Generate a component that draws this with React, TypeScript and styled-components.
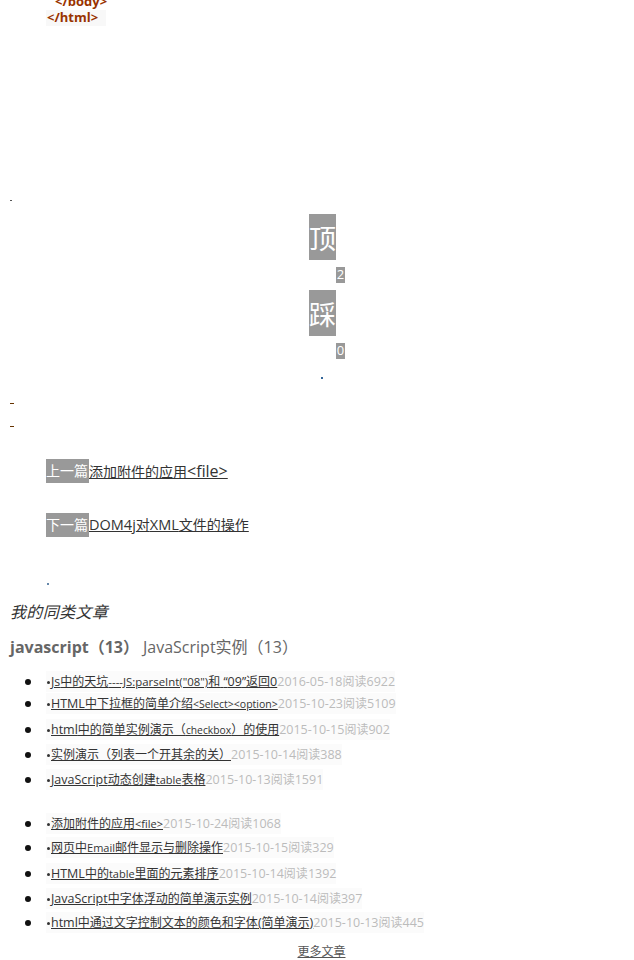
import React from 'react';
import styled, { createGlobalStyle } from 'styled-components';

const GlobalStyle = createGlobalStyle`
  html, body {
    margin: 0;
    padding: 0;
    background: #fff;
    overflow: hidden;
  }
  body {
    font-family: "Open Sans", "Noto Sans CJK SC", sans-serif;
    color: #333;
  }
`;

const Page = styled.div`
  width: 634px;
  height: 960px;
  overflow: hidden;
  padding-left: 10px;
  box-sizing: border-box;
`;

const CodeBlock = styled.div`
  margin: -6px 0 0 36px;
  height: 199px;
`;

const CodeLine = styled.div<{ $indent?: boolean; $shaded?: boolean }>`
  width: 60px;
  height: 16px;
  padding-left: ${(p) => (p.$indent ? '9px' : '1px')};
  box-sizing: border-box;
  font-size: 13px;
  font-weight: 700;
  line-height: 15px;
  color: #993300;
  background: ${(p) => (p.$shaded ? '#f8f8f8' : 'transparent')};
  white-space: pre;
`;

const Dot = styled.div`
  width: 2px;
  height: 1px;
  background: #555;
`;

const DotRow = styled.div`
  height: 15px;
  display: flex;
  align-items: center;
`;

const VoteArea = styled.div`
  display: flex;
  flex-direction: column;
  align-items: flex-start;
  margin-left: 299px;
  margin-top: 6px;
`;

const VoteButton = styled.div`
  width: 27px;
  height: 46px;
  overflow: hidden;
  background: #999;
  color: #fff;
  font-size: 27px;
  line-height: 48px;
  text-align: center;
  font-family: "Noto Sans CJK SC", sans-serif;
`;

const VoteCount = styled.div`
  width: 9px;
  height: 16px;
  margin: 7px 0 7px 27px;
  background: #999;
  color: #fff;
  font-size: 13px;
  line-height: 15px;
  text-align: center;
`;

const CenterDot = styled.div`
  margin: 11px 0 0 311px;
  width: 2px;
  height: 2px;
  background: #336699;
`;

const Dash = styled.div`
  width: 4px;
  height: 1px;
  background: #663300;
`;

const DashStack = styled.div`
  display: flex;
  flex-direction: column;
  gap: 22px;
  margin-top: 24px;
`;

const NavBlock = styled.div`
  display: flex;
  flex-direction: column;
  gap: 30px;
  margin-top: 32px;
`;

const NavRow = styled.div`
  display: flex;
  align-items: stretch;
  margin-left: 36px;
  height: 24px;
  font-size: 14px;
  line-height: 24px;
`;

const NavLabel = styled.span`
  width: 43px;
  background: #999;
  color: #fff;
  white-space: nowrap;
`;

const NavLink = styled.a`
  color: #333;
  text-decoration: underline;
  white-space: nowrap;
`;

const NavLatin = styled.span<{ $size: number }>`
  font-size: ${(p) => p.$size}px;
`;

const SmallDot = styled.div`
  width: 2px;
  height: 2px;
  margin: 46px 0 0 37px;
  background: #6688aa;
`;

const SectionTitle = styled.div`
  margin-top: 15px;
  height: 24px;
  font-size: 16px;
  letter-spacing: 0.35px;
  line-height: 24px;
  font-style: italic;
  color: #333;
`;

const Categories = styled.div`
  display: flex;
  gap: 4px;
  height: 24px;
  margin-top: 11px;
  font-size: 16px;
  line-height: 24px;
  color: #666;
`;

const Category = styled.span<{ $bold?: boolean }>`
  font-weight: ${(p) => (p.$bold ? 700 : 400)};
`;

const List = styled.ul<{ $top: number }>`
  list-style: none;
  margin: ${(p) => p.$top}px 0 0;
  padding: 0;
`;

const Item = styled.li<{ $gap: number }>`
  display: flex;
  align-items: center;
  height: 21px;
  margin-top: ${(p) => p.$gap}px;
  padding-left: 15px;
  &::before {
    content: "";
    width: 6px;
    height: 6px;
    border-radius: 50%;
    background: #111;
    margin-right: 15px;
  }
`;

const ItemBody = styled.div`
  display: flex;
  align-items: center;
  height: 21px;
  background: #fbfbfb;
  font-size: 12px;
  line-height: 21px;
  white-space: nowrap;
  &::before {
    content: "";
    width: 3px;
    height: 3px;
    border-radius: 50%;
    background: #333;
    margin: 1px 1px 0 1px;
  }
`;

const ItemLink = styled.a`
  color: #333;
  text-decoration: underline;
`;

const Latin = styled.span`
  font-size: 12.5px;
`;

const SmallLatin = styled.span<{ $size: number }>`
  font-size: ${(p) => p.$size}px;
`;

const ItemMeta = styled.span`
  color: #bbb;
`;

const MoreRow = styled.div`
  display: flex;
  justify-content: center;
  margin: 9px 0 0 -1px;
  font-size: 12px;
  line-height: 20px;
`;

const MoreLink = styled.a`
  color: #555;
  text-decoration: underline;
`;

const HAN = /[\u2E80-\u9FFF\uFF00-\uFFEF“”]+|[^\u2E80-\u9FFF\uFF00-\uFFEF“”]+/g;

// the source page mixes sizes: han at 12px, latin a bit larger, some words smaller
const Mixed: React.FC<{ text: string; small?: string; smallSize?: number }> = ({ text, small, smallSize = 11 }) => {
  const runs = text.match(HAN) || [];
  return (
    <>
      {runs.map((run, i) => {
        if (/[\u2E80-\u9FFF\uFF00-\uFFEF“”]/.test(run)) return <span key={i}>{run}</span>;
        if (small && run.includes(small)) return <SmallLatin key={i} $size={smallSize}>{run}</SmallLatin>;
        return <Latin key={i}>{run}</Latin>;
      })}
    </>
  );
};

type Article = { title: string; small?: string; smallSize?: number; date: string; reads: number; gap: number };

const firstList: Article[] = [
  { title: 'Js中的天坑----JS:parseInt("08")和 “09”返回0', small: 'parseInt', smallSize: 11.4, date: '2016-05-18', reads: 6922, gap: 0 },
  { title: 'HTML中下拉框的简单介绍<Select><option>', small: 'Select', smallSize: 10.5, date: '2015-10-23', reads: 5109, gap: 1 },
  { title: 'html中的简单实例演示（checkbox）的使用', small: 'checkbox', smallSize: 10.3, date: '2015-10-15', reads: 902, gap: 5 },
  { title: '实例演示（列表一个开其余的关）', date: '2015-10-14', reads: 388, gap: 4 },
  { title: 'JavaScript动态创建table表格', small: 'table', date: '2015-10-13', reads: 1591, gap: 4 },
];

const secondList: Article[] = [
  { title: '添加附件的应用<file>', small: 'file', date: '2015-10-24', reads: 1068, gap: 0 },
  { title: '网页中Email邮件显示与删除操作', small: 'Email', date: '2015-10-15', reads: 329, gap: 3 },
  { title: 'HTML中的table里面的元素排序', small: 'table', date: '2015-10-14', reads: 1392, gap: 5 },
  { title: 'JavaScript中字体浮动的简单演示实例', date: '2015-10-14', reads: 397, gap: 4 },
  { title: 'html中通过文字控制文本的颜色和字体(简单演示)', date: '2015-10-13', reads: 445, gap: 3 },
];

const ArticleList: React.FC<{ items: Article[]; top: number }> = ({ items, top }) => (
  <List $top={top}>
    {items.map((a) => (
      <Item key={a.title} $gap={a.gap}>
        <ItemBody>
          <ItemLink>
            <Mixed text={a.title} small={a.small} smallSize={a.smallSize} />
          </ItemLink>
          <ItemMeta>
            <Latin>{a.date}</Latin>阅读<Latin>{a.reads}</Latin>
          </ItemMeta>
        </ItemBody>
      </Item>
    ))}
  </List>
);

const App: React.FC = () => (
  <>
    <GlobalStyle />
    <Page>
      <CodeBlock>
        <CodeLine $indent>{'</body>'}</CodeLine>
        <CodeLine $shaded>{'</html>'}</CodeLine>
      </CodeBlock>
      <DotRow>
        <Dot />
      </DotRow>
      <VoteArea>
        <VoteButton>顶</VoteButton>
        <VoteCount>2</VoteCount>
        <VoteButton>踩</VoteButton>
        <VoteCount>0</VoteCount>
      </VoteArea>
      <CenterDot />
      <DashStack>
        <Dash />
        <Dash />
      </DashStack>
      <NavBlock>
        <NavRow>
          <NavLabel>上一篇</NavLabel>
          <NavLink>
            添加附件的应用<NavLatin $size={16}>&lt;file&gt;</NavLatin>
          </NavLink>
        </NavRow>
        <NavRow>
          <NavLabel>下一篇</NavLabel>
          <NavLink>
            <NavLatin $size={14.5}>DOM4j</NavLatin>对<NavLatin $size={14.5}>XML</NavLatin>文件的操作
          </NavLink>
        </NavRow>
      </NavBlock>
      <SmallDot />
      <SectionTitle>我的同类文章</SectionTitle>
      <Categories>
        <Category $bold>javascript（13）</Category>
        <Category>JavaScript实例（13）</Category>
      </Categories>
      <ArticleList items={firstList} top={12} />
      <ArticleList items={secondList} top={23} />
      <MoreRow>
        <MoreLink>更多文章</MoreLink>
      </MoreRow>
    </Page>
  </>
);

export default App;
